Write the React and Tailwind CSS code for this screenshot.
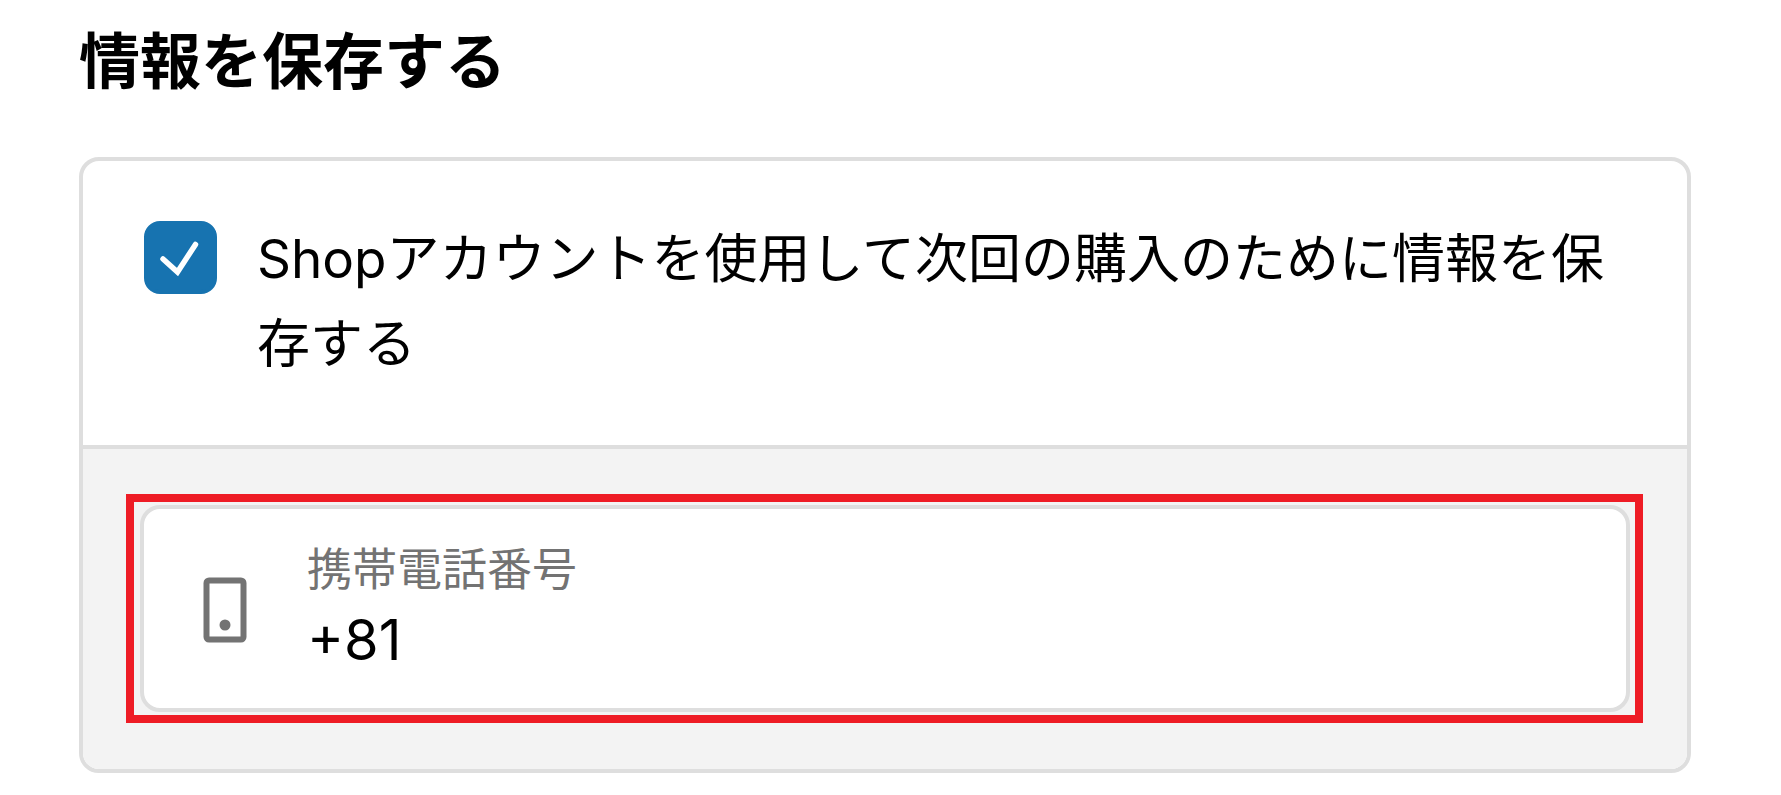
import React, { useState } from 'react';

const PhoneIcon = () => (
  <svg width="44" height="66" viewBox="0 0 44 66" fill="none" aria-hidden="true" className="mt-1 shrink-0">
    <rect x="3.5" y="3.5" width="37" height="59" rx="2.5" stroke="#737373" strokeWidth="6" />
    <circle cx="22" cy="48" r="5.5" fill="#737373" />
  </svg>
);

const SaveCheckbox = ({ checked, onChange }) => (
  <span className="relative w-[73px] h-[73px] mt-1 shrink-0">
    <input
      id="save-info"
      type="checkbox"
      checked={checked}
      onChange={(e) => onChange(e.target.checked)}
      className="peer block w-full h-full appearance-none rounded-2xl border-4 border-[#dedede] bg-white checked:border-[#1773b0] checked:bg-[#1773b0]"
    />
    <svg
      viewBox="0 0 73 73"
      fill="none"
      aria-hidden="true"
      className="absolute inset-0 hidden pointer-events-none peer-checked:block"
    >
      <path d="M19 38 L33.5 51 L51.5 23.5" stroke="white" strokeWidth="5.5" strokeLinecap="round" strokeLinejoin="miter" />
    </svg>
  </span>
);

const App = () => {
  const [saveInfo, setSaveInfo] = useState(true);
  const [phone, setPhone] = useState('+81');

  return (
    <main className="bg-white pl-[79px] pr-[90px] pt-[18px] pb-[22px] text-black font-['Inter','Noto_Sans_CJK_JP',sans-serif]">
      <h1 className="text-[61px] leading-[88px] font-bold">情報を保存する</h1>

      <section className="mt-[51px] border-4 border-[#dedede] rounded-[20px] overflow-hidden">
        {/* Opt-in */}
        <div className="flex items-start gap-10 pl-[61px] pr-16 pt-14 pb-[58px]">
          <SaveCheckbox checked={saveInfo} onChange={setSaveInfo} />
          <label htmlFor="save-info" className="flex-1 text-[53px] leading-[85px]">
            Shopアカウントを使用して次回の購入のために情報を保存する
          </label>
        </div>

        {/* Phone number */}
        <div className="border-t-4 border-[#dedede] bg-[#f3f3f3] pl-[43px] pr-11 pt-[45px] pb-[46px]">
          <div className="border-8 border-[#ee1c25] pl-[6px] pr-[5px] py-[3px]">
            <div className="flex items-center gap-[60px] border-4 border-[#dedede] rounded-[20px] bg-white px-[59px] pt-[29px] pb-[31px]">
              <PhoneIcon />
              <div className="flex-1">
                <label htmlFor="phone" className="block text-[45px] leading-[64px] text-[#737373]">
                  携帯電話番号
                </label>
                <input
                  id="phone"
                  type="tel"
                  value={phone}
                  onChange={(e) => setPhone(e.target.value)}
                  className="block w-full h-[75px] text-[56px] bg-transparent outline-none"
                />
              </div>
            </div>
          </div>
        </div>
      </section>
    </main>
  );
};

export default App;
